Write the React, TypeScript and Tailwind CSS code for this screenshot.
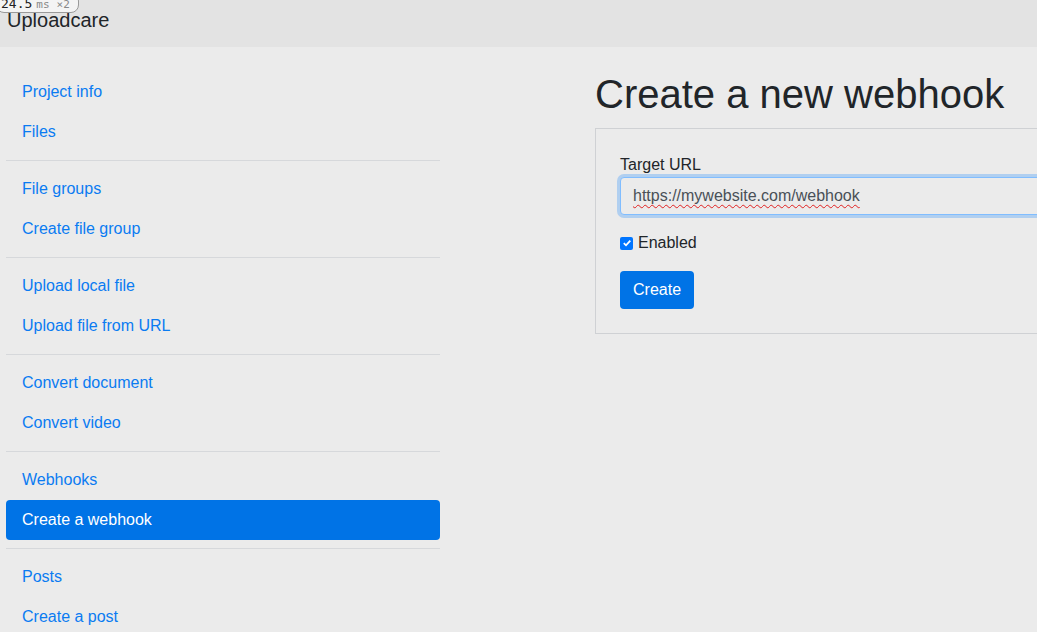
const sections: { label: string; active?: boolean }[][] = [
  [{ label: 'Project info' }, { label: 'Files' }],
  [{ label: 'File groups' }, { label: 'Create file group' }],
  [{ label: 'Upload local file' }, { label: 'Upload file from URL' }],
  [{ label: 'Convert document' }, { label: 'Convert video' }],
  [{ label: 'Webhooks' }, { label: 'Create a webhook', active: true }],
  [{ label: 'Posts' }, { label: 'Create a post' }],
];

export default function App() {
  return (
    <div
      className="relative w-[1037px] h-[632px] overflow-hidden bg-[#ebebeb] text-[#212529]"
      style={{ fontFamily: '"Liberation Sans", Arial, sans-serif' }}
    >
      {/* timing badge overlay */}
      <div className="absolute -left-[4px] -top-[7px] h-[20px] pl-[4px] pr-[8px] flex items-end pb-[2px] bg-[#f4f4f4] border border-[#9a9a9a] rounded-[8px] text-[13px] leading-none text-[#222] font-['DejaVu_Sans_Mono',monospace] z-10">
        24.5<span className="text-[11px] text-[#888] ml-[4px]">ms</span>
        <span className="text-[11px] text-[#888] ml-[7px]">×2</span>
      </div>

      <header className="h-[47px] bg-[#e3e3e3] pl-[7px]">
        <div className="text-[20px] leading-[40px] text-[#212529]">Uploadcare</div>
      </header>

      <div className="flex mt-[25px]">
        <nav className="w-[434px] ml-[6px] shrink-0">
          {sections.map((group, i) => (
            <div key={i}>
              {i > 0 && <hr className="my-2 border-0 border-t border-[#d6d8db]" />}
              {group.map(item => (
                <a
                  key={item.label}
                  href="#"
                  className={
                    item.active
                      ? 'block px-4 py-2 text-[16px] leading-6 rounded bg-[#0073e6] text-white'
                      : 'block px-4 py-2 text-[16px] leading-6 text-[#0a7bf2]'
                  }
                >
                  {item.label}
                </a>
              ))}
            </div>
          ))}
        </nav>

        <main className="ml-[155px] w-[600px] shrink-0 -mt-[1px]">
          <h1 className="text-[40px] leading-[48px] font-normal text-[#212529] mb-[10px] -mt-[1px]">
            Create a new webhook
          </h1>
          <div className="border border-[#cfd1d4] px-6 pt-6 pb-6">
            <label className="block text-[16px] leading-6">Target URL</label>
            <div className="h-[38px] rounded border border-[#80bdff] shadow-[0_0_0_3px_rgba(0,123,255,0.25)] bg-[#ebebeb] flex items-center px-3 text-[16px] text-[#495057]">
              <span className="underline decoration-wavy decoration-[#e02020] decoration-1 underline-offset-[3px]">
                https://mywebsite.com/webhook
              </span>
            </div>
            <div className="flex items-center mt-[16px]">
              <span className="w-[13px] h-[13px] rounded-[2px] bg-[#0075ff] flex items-center justify-center">
                <svg width="10" height="10" viewBox="0 0 10 10">
                  <path d="M1.8 5.2 L4 7.3 L8.3 2.6" stroke="white" strokeWidth="1.8" fill="none" />
                </svg>
              </span>
              <span className="ml-[5px] text-[16px] leading-6">Enabled</span>
            </div>
            <button className="mt-[16px] h-[38px] px-[13px] rounded bg-[#0073e6] text-white text-[16px]">
              Create
            </button>
          </div>
        </main>
      </div>
    </div>
  );
}
